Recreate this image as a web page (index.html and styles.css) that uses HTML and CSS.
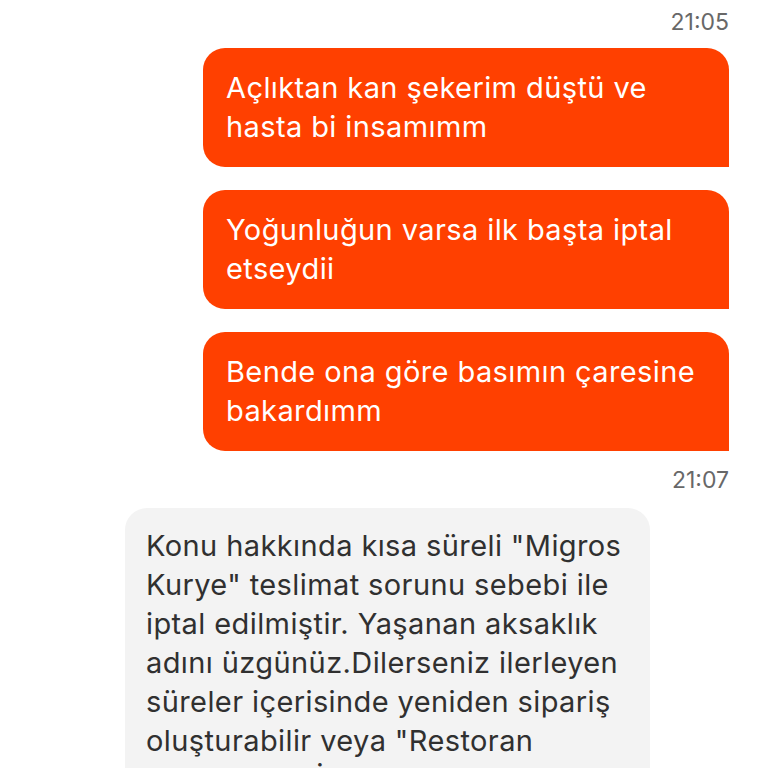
FILE: index.html
```html
<!DOCTYPE html>
<html lang="tr">
<head>
    <meta charset="UTF-8">
    <meta name="viewport" content="width=device-width, initial-scale=1.0">
    <title>Sohbet</title>
    <link rel="stylesheet" href="styles.css">
</head>
<body>
    <div class="chat">
        <div class="time">21:05</div>
        <div class="msg msg-out">Açlıktan kan şekerim düştü ve hasta bi insamımm</div>
        <div class="msg msg-out">Yoğunluğun varsa ilk başta iptal etseydii</div>
        <div class="msg msg-out">Bende ona göre basımın çaresine bakardımm</div>
        <div class="time time-late">21:07</div>
        <div class="msg msg-in">Konu hakkında kısa süreli "Migros Kurye" teslimat sorunu sebebi ile iptal edilmiştir. Yaşanan aksaklık adını üzgünüz.Dilerseniz ilerleyen süreler içerisinde yeniden sipariş oluşturabilir veya "Restoran Desteği" ile İletişime geçebilirsiniz.</div>
    </div>
</body>
</html>
```

FILE: styles.css
```css
body {
    margin: 0;
    background-color: #ffffff;
    font-family: Inter, "Noto Sans", sans-serif;
    overflow: hidden;
}
.chat {
    display: flex;
    flex-direction: column;
    padding: 8px 39px 0 125px;
}
.time {
    align-self: flex-end;
    font-size: 23px;
    line-height: 28px;
    color: #686868;
    margin-bottom: 12px;
}
.time-late {
    margin-top: -8px;
    margin-bottom: 14px;
}
.msg {
    box-sizing: border-box;
    width: 526px;
    font-size: 29px;
    letter-spacing: 0.4px;
    line-height: 38.5px;
    padding: 21px 23px 21px 23px;
    margin-bottom: 23px;
}
.msg-out {
    align-self: flex-end;
    background-color: #ff4000;
    color: #ffffff;
    border-radius: 22px 22px 0 22px;
}
.msg-in {
    align-self: flex-start;
    width: 525px;
    line-height: 39px;
    padding: 18px 21px;
    background-color: #f3f3f3;
    color: #303030;
    border-radius: 22px 22px 22px 0;
}
```
